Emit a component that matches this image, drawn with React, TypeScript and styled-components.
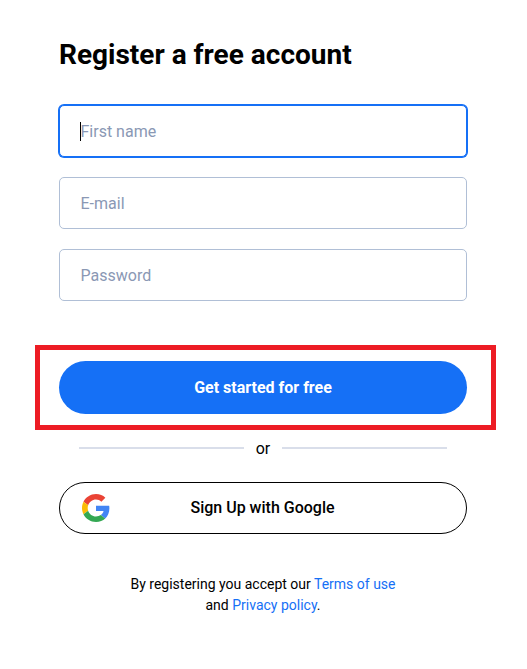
import styled, { createGlobalStyle } from 'styled-components'

const GlobalStyle = createGlobalStyle`
  html, body {
    background: #fff;
    margin: 0;
    padding: 0;
  }
  body {
    color: #000;
    font-family: Roboto, "Liberation Sans", sans-serif;
  }
`

const Page = styled.main`
  box-sizing: border-box;
  display: flex;
  flex-direction: column;
  min-height: 669px;
  padding: 38px 60px 0 59px;
  width: 527px;
`

const Title = styled.h1`
  font-size: 28px;
  font-weight: 700;
  line-height: 34px;
  margin: 0 0 33px;
`

const Fields = styled.div`
  display: flex;
  flex-direction: column;
  gap: 20px;
  margin-bottom: 60px;
`

const FieldWrap = styled.div<{ $caret?: boolean }>`
  position: relative;

  &::after {
    background: #000;
    content: '';
    display: ${({ $caret }) => ($caret ? 'block' : 'none')};
    height: 19px;
    left: 21px;
    pointer-events: none;
    position: absolute;
    top: 17px;
    width: 1px;
  }
`

const Input = styled.input`
  border: 1px solid #b0bfd6;
  border-radius: 5px;
  box-sizing: border-box;
  caret-color: transparent;
  color: #000;
  display: block;
  font-family: inherit;
  font-size: 16px;
  height: 52px;
  outline: none;
  padding: 0 20.5px;
  width: 100%;

  &::placeholder {
    color: #8a98b4;
    opacity: 1;
  }

  &:focus {
    border-color: #1570f6;
    box-shadow: 0 0 0 1px #1570f6;
  }
`

const SubmitArea = styled.div`
  position: relative;

  &::after {
    border: 5px solid #ed1c24;
    bottom: -16px;
    content: '';
    left: -24px;
    pointer-events: none;
    position: absolute;
    right: -29px;
    top: -16px;
  }
`

const PrimaryButton = styled.button`
  background: #1570f6;
  border: 0;
  border-radius: 27px;
  color: #fff;
  display: block;
  font-family: inherit;
  font-size: 16px;
  font-weight: 700;
  height: 53px;
  width: 100%;
`

const Divider = styled.div`
  align-items: center;
  display: flex;
  font-size: 16px;
  gap: 12px;
  height: 22px;
  justify-content: center;
  margin: 23px 20px 23px;

  &::before,
  &::after {
    background: #d9deea;
    content: '';
    flex: 1;
    height: 2px;
  }
`

const GoogleButton = styled.button`
  align-items: center;
  background: #fff;
  border: 1px solid #000;
  border-radius: 26px;
  box-sizing: border-box;
  color: #000;
  display: flex;
  font-family: inherit;
  font-size: 16px;
  font-weight: 500;
  height: 52px;
  justify-content: center;
  padding: 0 1px 2px 0;
  position: relative;
  width: 100%;

  svg {
    left: 22px;
    position: absolute;
    top: 11px;
  }
`

const Legal = styled.p`
  font-size: 14px;
  line-height: 21px;
  margin: 40px 0 0;
  text-align: center;
`

const LegalLink = styled.a`
  color: #1570f6;
  text-decoration: none;
`

const GoogleIcon = () => (
  <svg width="28" height="28" viewBox="0 0 48 48" aria-hidden="true">
    <path fill="#EA4335" d="M24 9.5c3.54 0 6.71 1.22 9.21 3.6l6.85-6.85C35.9 2.38 30.47 0 24 0 14.62 0 6.51 5.38 2.56 13.22l7.98 6.19C12.43 13.72 17.74 9.5 24 9.5z" />
    <path fill="#4285F4" d="M46.98 24.55c0-1.57-.15-3.09-.38-4.55H24v9.02h12.94c-.58 2.96-2.26 5.48-4.78 7.18l7.73 6c4.51-4.18 7.09-10.36 7.09-17.65z" />
    <path fill="#FBBC05" d="M10.53 28.59c-.48-1.45-.76-2.99-.76-4.59s.27-3.14.76-4.59l-7.98-6.19C.92 16.46 0 20.12 0 24c0 3.88.92 7.54 2.56 10.78l7.97-6.19z" />
    <path fill="#34A853" d="M24 48c6.48 0 11.93-2.13 15.89-5.81l-7.73-6c-2.15 1.45-4.92 2.3-8.16 2.3-6.26 0-11.57-4.22-13.47-9.91l-7.98 6.19C6.51 42.62 14.62 48 24 48z" />
  </svg>
)

const App = () => (
  <Page>
    <GlobalStyle />
    <Title>Register a free account</Title>
    <Fields>
      <FieldWrap $caret>
        <Input autoFocus placeholder="First name" />
      </FieldWrap>
      <FieldWrap>
        <Input placeholder="E-mail" />
      </FieldWrap>
      <FieldWrap>
        <Input placeholder="Password" type="password" />
      </FieldWrap>
    </Fields>
    <SubmitArea>
      <PrimaryButton>Get started for free</PrimaryButton>
    </SubmitArea>
    <Divider>or</Divider>
    <GoogleButton>
      <GoogleIcon />
      Sign Up with Google
    </GoogleButton>
    <Legal>
      By registering you accept our <LegalLink href="#">Terms of use</LegalLink>
      <br />
      and <LegalLink href="#">Privacy policy</LegalLink>.
    </Legal>
  </Page>
)

export default App
